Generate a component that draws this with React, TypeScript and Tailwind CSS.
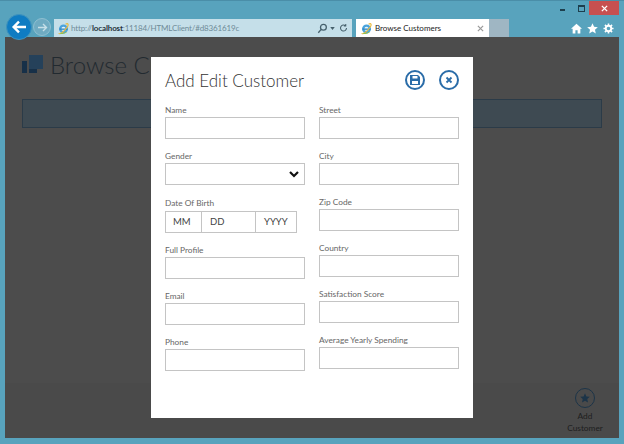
import type { ReactNode } from "react";

function IeLogo() {
  return (
    <svg width="13" height="13" viewBox="0 0 16 16" className="shrink-0">
      <circle cx="8" cy="8.5" r="5.5" fill="#4aa3dc" />
      <circle cx="8" cy="8.5" r="2.6" fill="#e8f4fb" />
      <rect x="3" y="8" width="10" height="1.6" fill="#2f87c4" />
      <path d="M2 14c1 1 4-.5 7-3.5s5.5-6.5 4.5-8c-.8-1-3 .2-3 .2" fill="none" stroke="#e9b93c" strokeWidth="1.4" />
      <path d="M4 13.5c2 1 5 .8 7.5-1" fill="none" stroke="#8cc152" strokeWidth="1.4" />
    </svg>
  );
}

function BackButton() {
  return (
    <div className="w-[26px] h-[26px] rounded-full bg-[#0f7cc2] border border-[#3f93bd] flex items-center justify-center">
      <svg width="16" height="14" viewBox="0 0 17 15" fill="none" stroke="#ffffff" strokeWidth="2.6">
        <path d="M16 7.5H3M8.5 1.8 2.8 7.5l5.7 5.7" />
      </svg>
    </div>
  );
}

function ForwardButton() {
  return (
    <div className="w-[18px] h-[18px] rounded-full bg-[#6fabc2] border border-[#8fc0d1] flex items-center justify-center">
      <svg width="11" height="9" viewBox="0 0 11 9" fill="none" stroke="#c6dfe8" strokeWidth="1.4">
        <path d="M1 4.5h8M6 1l3.5 3.5L6 8" />
      </svg>
    </div>
  );
}

function AddressBar() {
  return (
    <div className="w-[298px] h-[18px] bg-[#c5dfe9] flex items-center pl-[3px] pr-[2px]">
      <IeLogo />
      <span className="ml-[1px] text-[8px] tracking-[-0.15px] leading-none text-[#6f8b98] whitespace-nowrap">
        http://<span className="font-bold text-[#27343b]">localhost</span>:11184/HTMLClient/#d8361619c
      </span>
      <div className="ml-auto flex items-center">
        <svg width="11" height="11" viewBox="0 0 12 12" fill="none" stroke="#46606c" strokeWidth="1.4">
          <circle cx="7" cy="4.6" r="3.2" />
          <path d="M4.6 7 1.4 10.6" />
        </svg>
        <svg width="5" height="3" viewBox="0 0 6 4" fill="#46606c" className="ml-[2px] mr-[4px]">
          <path d="M0 0h6L3 4z" />
        </svg>
        <svg width="9" height="10" viewBox="0 0 12 12" fill="none" stroke="#46606c" strokeWidth="1.4" className="mr-[2px]">
          <path d="M10 6a4 4 0 1 1-1.4-3M9 .8V3.3H6.5" />
        </svg>
      </div>
    </div>
  );
}

function BrowserTab() {
  return (
    <div className="flex h-[18px]">
      <div className="w-[133px] bg-white flex items-center pl-[4px] pr-[3px]">
        <IeLogo />
        <span className="ml-[2px] text-[8px] leading-none text-[#222222] whitespace-nowrap">Browse Customers</span>
        <svg width="7" height="7" viewBox="0 0 8 8" stroke="#9a9a9a" strokeWidth="1.4" className="ml-auto mr-[2px]">
          <path d="M1 1l6 6M7 1 1 7" />
        </svg>
      </div>
      <div className="w-[20px] bg-[#9fb6c3]" />
    </div>
  );
}

function WindowControls() {
  return (
    <div className="flex items-start justify-end h-[14px]">
      <div className="w-[5px] h-[2px] bg-[#1d3f4e] mt-[8px] mr-[13px]" />
      <div className="w-[7px] h-[7px] border border-[#1d3f4e] border-t-2 mt-[4px] mr-[4px]" />
      <div className="w-[30px] h-[14px] bg-[#c75050] flex items-center justify-center">
        <svg width="7" height="7" viewBox="0 0 8 8" stroke="#ffffff" strokeWidth="1.6">
          <path d="M1 1l6 6M7 1 1 7" />
        </svg>
      </div>
    </div>
  );
}

function ToolIcons() {
  return (
    <div className="flex items-center gap-[5px] justify-end pr-[10px] h-[18px]">
      <svg width="11" height="11" viewBox="0 0 12 12" fill="#ffffff">
        <path d="M6 .8 0 6.4h1.8V11.5h3V8h2.4v3.5h3V6.4H12z" />
      </svg>
      <svg width="11" height="11" viewBox="0 0 12 12" fill="#ffffff">
        <path d="m6 .4 1.7 3.8 4.1.4-3.1 2.7.9 4.1L6 9.3l-3.6 2.1.9-4.1L.2 4.6l4.1-.4z" />
      </svg>
      <svg width="11" height="11" viewBox="0 0 12 12" fill="none" stroke="#ffffff">
        <circle cx="6" cy="6" r="3" strokeWidth="2" />
        <path d="M6 .5v2M6 9.5v2M.5 6h2M9.5 6h2M2.1 2.1l1.4 1.4M8.5 8.5l1.4 1.4M9.9 2.1 8.5 3.5M3.5 8.5l-1.4 1.4" strokeWidth="1.7" />
      </svg>
    </div>
  );
}

function CircleButton({ children }: { children: ReactNode }) {
  return (
    <div className="w-[20px] h-[20px] rounded-full border-2 border-[#2a6ca8] flex items-center justify-center">
      {children}
    </div>
  );
}

function Field({ label, className, children }: { label: string; className?: string; children?: ReactNode }) {
  return (
    <div className={className}>
      <div className="h-[12px] text-[8.3px] leading-[14px] text-[#666666] whitespace-nowrap">{label}</div>
      <div className="mt-[2px] h-[22px] w-[140px] border border-[#c4c4c4] bg-white flex items-center justify-end pr-[5px]">
        {children}
      </div>
    </div>
  );
}

function DateParts() {
  return (
    <div className="mt-[2px] h-[22px] w-[132px] border border-[#c4c4c4] flex text-[9.5px] text-[#444444]">
      <div className="w-[36px] border-r border-[#c4c4c4] flex items-center pl-[7px]">MM</div>
      <div className="w-[54px] border-r border-[#c4c4c4] flex items-center pl-[8px]">DD</div>
      <div className="flex-1 flex items-center pl-[8px]">YYYY</div>
    </div>
  );
}

export default function App() {
  return (
    <div className="relative w-[624px] h-[444px] overflow-hidden bg-[#58a3bd] border-t border-[#4a8ea8] font-['Lato',sans-serif] flex flex-col">
      {/* browser chrome */}
      <header className="h-[36px] flex items-end pl-[6px]">
        <div className="flex items-center h-[26px] mb-[-3px] z-10">
          <BackButton />
          <div className="ml-[1px]"><ForwardButton /></div>
        </div>
        <div className="ml-[3px]"><AddressBar /></div>
        <div className="ml-[4px]"><BrowserTab /></div>
        <div className="ml-auto w-[70px] self-stretch flex flex-col justify-between pr-[5px]">
          <WindowControls />
          <div className="mr-[-5px]"><ToolIcons /></div>
        </div>
      </header>

      {/* page behind the dialog */}
      <main className="mx-[5px] w-[614px] h-[401px] bg-[#4c4c4c] flex flex-col">
        <div className="flex items-center pl-[17px] h-[55px]">
          <svg width="22" height="19" viewBox="0 0 22 19">
            <rect x="7" y="0" width="14" height="14" fill="#25415a" />
            <rect x="0" y="6" width="5" height="12" fill="#173048" />
            <rect x="7" y="14" width="8" height="4" fill="#173048" />
          </svg>
          <span className="ml-[6px] text-[24px] leading-none text-[#222a30] font-light whitespace-nowrap">Browse Customers</span>
        </div>
        <div className="ml-[17px] mt-[7px] w-[580px] h-[29px] bg-[#3e4a52] border border-[#2b3b48]" />
        <footer className="mt-auto h-[55px] bg-[#4a4a4a] flex justify-end pr-[14px] pt-[5px]">
          <div className="w-[40px] flex flex-col items-center">
            <div className="w-[20px] h-[20px] rounded-full border-[1.5px] border-[#1c3448] flex items-center justify-center">
              <svg width="10" height="10" viewBox="0 0 12 12" fill="#1c3448">
                <path d="m6 .4 1.7 3.8 4.1.4-3.1 2.7.9 4.1L6 9.3l-3.6 2.1.9-4.1L.2 4.6l4.1-.4z" />
              </svg>
            </div>
            <div className="mt-[2px] text-[8.3px] leading-[12px] text-center text-[#1e1e1e]">Add<br />Customer</div>
          </div>
        </footer>
      </main>

      {/* dialog */}
      <div className="absolute left-[151px] top-[56px] w-[322px] h-[361px] bg-white px-[14px]">
        <div className="flex items-center h-[46px]">
          <h1 className="text-[17px] leading-none text-[#333333] font-light whitespace-nowrap">Add Edit Customer</h1>
          <div className="ml-auto flex items-center gap-[14px]">
            <CircleButton>
              <svg width="10" height="10" viewBox="0 0 10 10" fill="#2a6ca8">
                <path fillRule="evenodd" d="M0 0h8l2 2v8H0zM2.5 1v2.5h5V1zM2 6v3h6V6z" />
              </svg>
            </CircleButton>
            <CircleButton>
              <svg width="8" height="8" viewBox="0 0 8 8" stroke="#2a6ca8" strokeWidth="1.8">
                <path d="M1.5 1.5l5 5M6.5 1.5l-5 5" />
              </svg>
            </CircleButton>
          </div>
        </div>
        <div className="flex gap-[14px]">
          <div className="w-[140px]">
            <Field label="Name" />
            <Field label="Gender" className="mt-[10px]">
              <svg width="10" height="7" viewBox="0 0 10 7" fill="none" stroke="#111111" strokeWidth="2.2">
                <path d="M1 1l4 4 4-4" />
              </svg>
            </Field>
            <div className="mt-[12px]">
              <div className="h-[12px] text-[8.3px] leading-[12px] text-[#666666]">Date Of Birth</div>
              <DateParts />
            </div>
            <Field label="Full Profile" className="mt-[10px]" />
            <Field label="Email" className="mt-[10px]" />
            <Field label="Phone" className="mt-[10px]" />
          </div>
          <div className="w-[140px]">
            <Field label="Street" />
            <Field label="City" className="mt-[10px]" />
            <Field label="Zip Code" className="mt-[10px]" />
            <Field label="Country" className="mt-[10px]" />
            <Field label="Satisfaction Score" className="mt-[10px]" />
            <Field label="Average Yearly Spending" className="mt-[10px]" />
          </div>
        </div>
      </div>
    </div>
  );
}
